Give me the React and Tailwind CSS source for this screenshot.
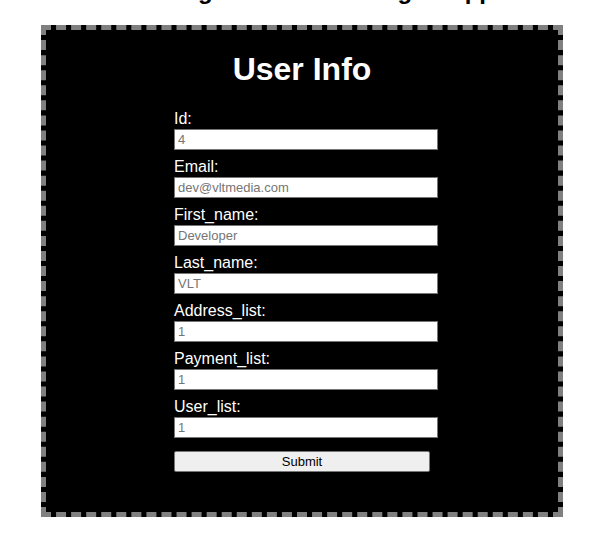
const fields = [
  { name: "id", label: "Id:", placeholder: "4" },
  { name: "email", label: "Email:", placeholder: "dev@vltmedia.com" },
  { name: "first_name", label: "First_name:", placeholder: "Developer" },
  { name: "last_name", label: "Last_name:", placeholder: "VLT" },
  { name: "address_list", label: "Address_list:", placeholder: "1" },
  { name: "payment_list", label: "Payment_list:", placeholder: "1" },
  { name: "user_list", label: "User_list:", placeholder: "1" },
];

function Field({ name, label, placeholder }) {
  return (
    <div className="flex flex-col">
      <label htmlFor={name} className="text-base leading-5">
        {label}
      </label>
      <input
        id={name}
        name={name}
        type="text"
        placeholder={placeholder}
        className="h-[21px] w-[calc(100%+8px)] border border-[#767676] bg-white px-[3px] text-[13px] text-black placeholder:text-[#757575]"
      />
    </div>
  );
}

export default function App() {
  return (
    <div className="overflow-hidden bg-white pr-[35px] pb-8 pl-[41px] font-['Liberation_Sans',Arial,sans-serif]">
      <h2 className="-mt-[23px] mb-5 text-center text-2xl leading-7 font-bold whitespace-nowrap text-black">
        Handling User List Testing to App
      </h2>
      <main className="border-[5px] border-dashed border-[#808080] bg-black pt-[21px] pb-10 text-white">
        <h1 className="mb-[21px] text-center text-[32px] leading-[37px] font-bold">
          User Info
        </h1>
        <form
          className="mx-auto w-1/2"
          onSubmit={(event) => event.preventDefault()}
        >
          <div className="flex flex-col gap-[7px]">
            {fields.map((field) => (
              <Field key={field.name} {...field} />
            ))}
          </div>
          <button
            type="submit"
            className="mt-[13px] block h-[21px] w-full rounded-xs border border-[#767676] bg-[#efefef] text-center text-[13px] leading-[19px] text-black"
          >
            Submit
          </button>
        </form>
      </main>
    </div>
  );
}
